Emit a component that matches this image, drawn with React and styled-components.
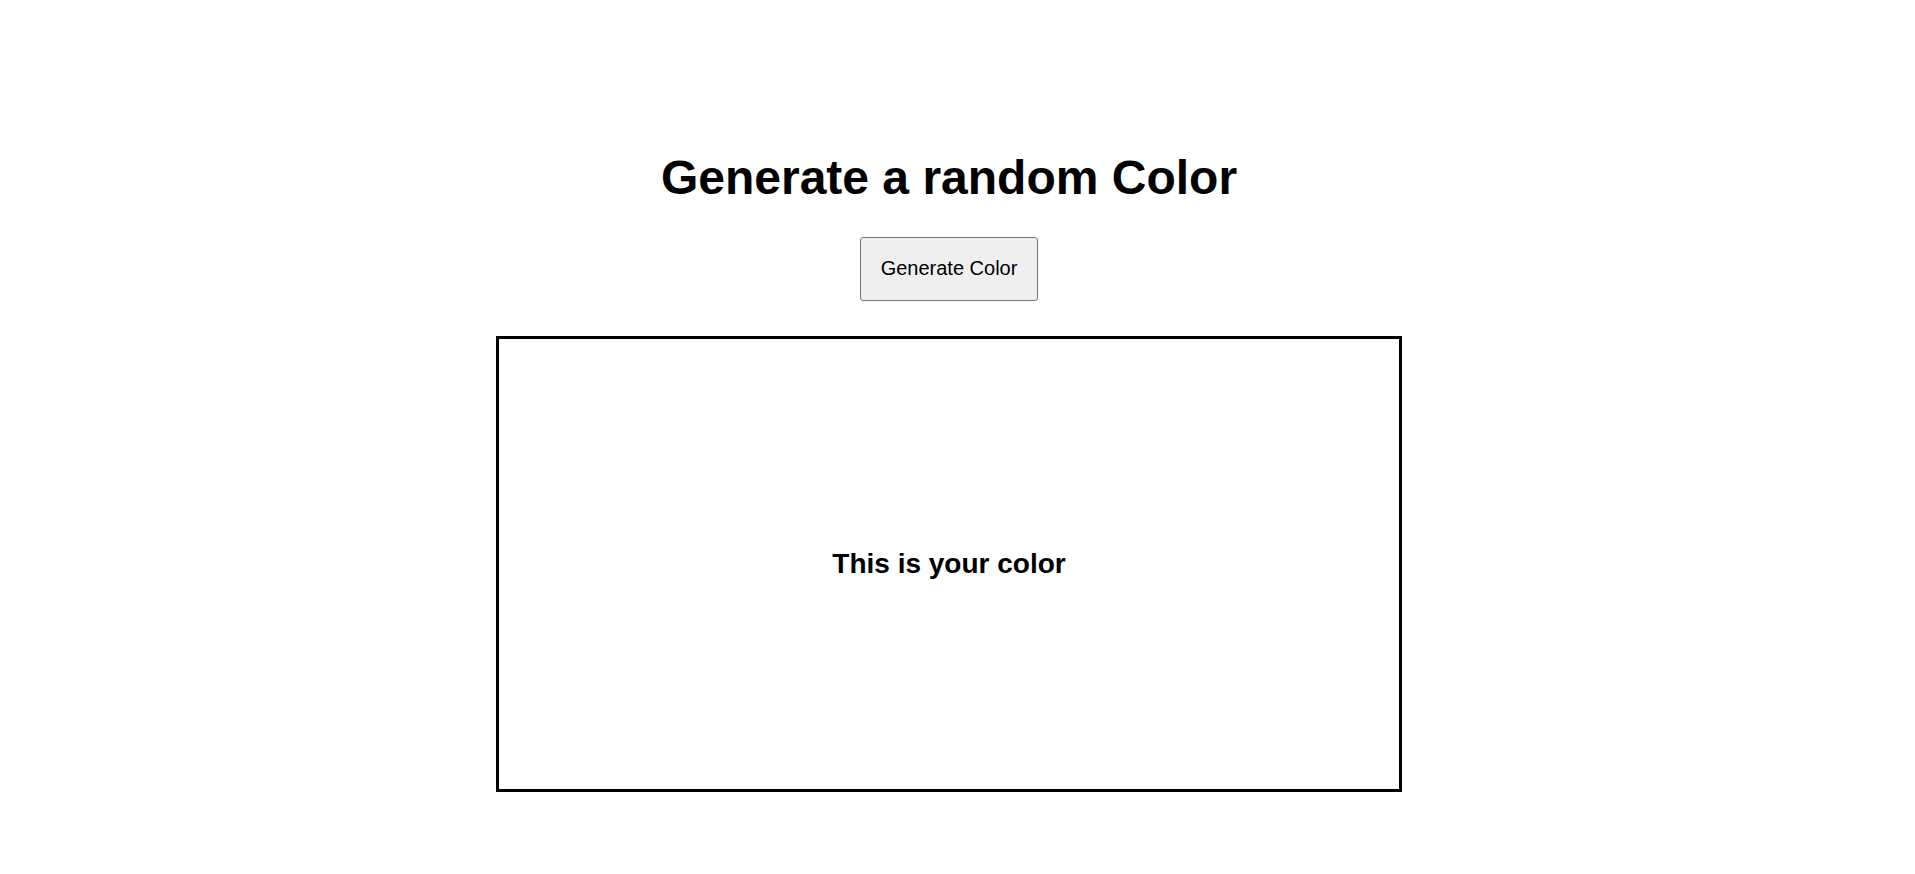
import { useState } from "react";
import styled, { createGlobalStyle } from "styled-components";

const GlobalStyle = createGlobalStyle`
  body {
    margin: 0;
    font-family: "Liberation Sans", Arial, sans-serif;
    background: #fff;
    color: #000;
  }
`;

// right padding leaves room for the scrollbar the reference shows
const Page = styled.div`
  display: flex;
  flex-direction: column;
  align-items: center;
  padding: 150px 17px 123px 0;
`;

const Title = styled.h1`
  margin: 0 0 32px;
  font-size: 48px;
  font-weight: 700;
  line-height: normal;
`;

const GenerateButton = styled.button`
  margin-bottom: 35px;
  padding: 19px 20px 20px;
  font-family: "Liberation Sans", Arial, sans-serif;
  font-size: 20px;
  line-height: normal;
  color: #000;
  background: #efefef;
  border: 1px solid #767676;
  border-radius: 3px;
  cursor: pointer;
`;

const ColorBox = styled.div`
  width: 900px;
  height: 450px;
  border: 3px solid #000;
  display: flex;
  align-items: center;
  justify-content: center;
  background: ${(p) => p.$color};
`;

const BoxLabel = styled.h2`
  margin: 0;
  font-size: 28px;
  font-weight: 700;
`;

const randomColor = () =>
  "#" + Math.floor(Math.random() * 0xffffff).toString(16).padStart(6, "0");

export default function App() {
  const [color, setColor] = useState("#ffffff");

  return (
    <>
      <GlobalStyle />
      <Page>
        <Title>Generate a random Color</Title>
        <GenerateButton onClick={() => setColor(randomColor())}>Generate Color</GenerateButton>
        <ColorBox $color={color}>
          <BoxLabel>This is your color</BoxLabel>
        </ColorBox>
      </Page>
    </>
  );
}
